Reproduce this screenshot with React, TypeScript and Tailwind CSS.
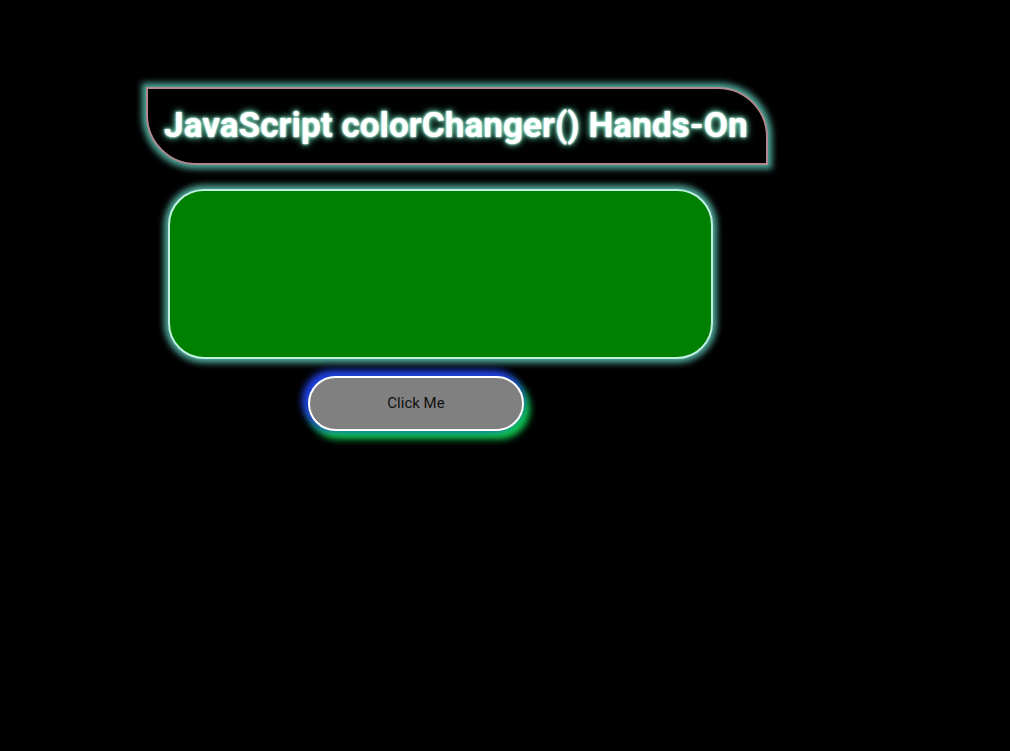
export default function App() {
  return (
    <div className="min-h-[751px] w-full bg-black font-['Roboto',sans-serif]">
      <div className="flex flex-col items-start pt-[87px]">
        <h1 className="ml-[146px] flex h-[78px] w-[622px] items-center rounded-tr-[50px] rounded-bl-[50px] border-2 border-[#b08890] bg-black pl-[16px] text-[35px] font-bold tracking-[0.1px] text-white shadow-[0_0_6px_4px_#4fa89a] [text-shadow:0_0_2px_#e0fff5,0_0_3px_#a0f0d0,0_0_6px_#70d0b0,0_0_9px_#40a080]">
          JavaScript colorChanger() Hands-On
        </h1>
        <div className="ml-[168px] mt-[24px] h-[170px] w-[545px] rounded-[36px] border-2 border-[#c0f0e0] bg-[#008000] shadow-[0_0_6px_4px_#4fa89a]" />
        <button className="ml-[308px] mt-[17px] h-[55px] w-[216px] rounded-full border-2 border-white bg-[#808080] text-[15px] text-[#111] shadow-[-3px_-3px_7px_3px_#2040e0,3px_5px_7px_3px_#10d050]">
          Click Me
        </button>
      </div>
    </div>
  );
}
